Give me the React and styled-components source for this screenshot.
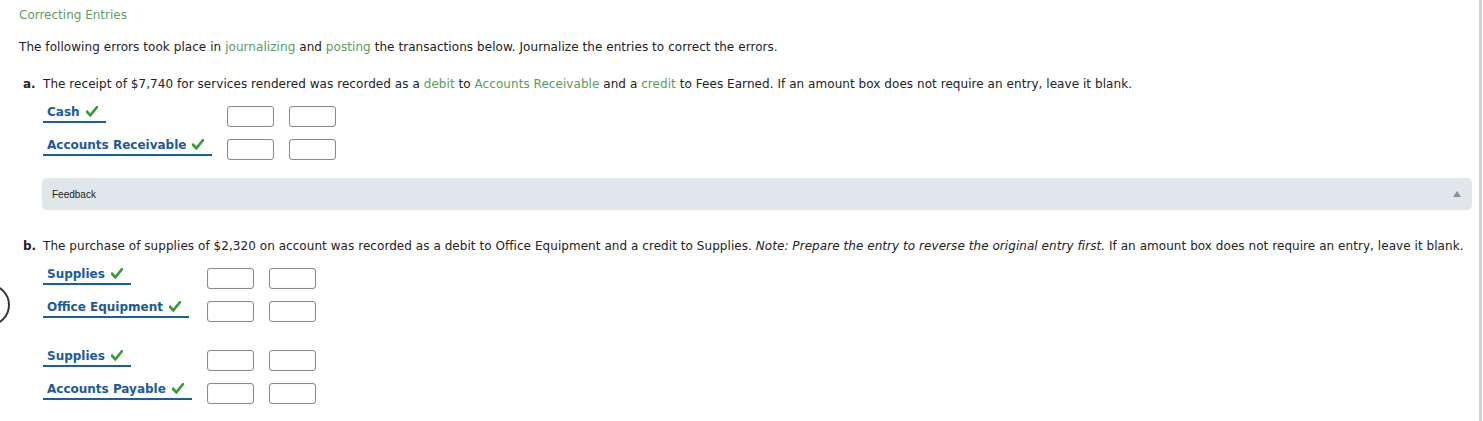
import React from 'react';
import styled, { createGlobalStyle } from 'styled-components';

const GlobalStyle = createGlobalStyle`
  body {
    margin: 0;
    background: #ffffff;
    font-family: "DejaVu Sans", Verdana, sans-serif;
    font-size: 12px;
    color: #222222;
  }
`;

const Page = styled.div`
  position: relative;
  box-sizing: border-box;
  width: 1482px;
  min-height: 421px;
  padding: 7px 7px 0 19px;
  border-right: 3px solid #d0d0d0;
  overflow: hidden;
`;

const Title = styled.div`
  line-height: 16px;
  color: #5e9e62;
`;

const Intro = styled.p`
  margin: 16px 0 0;
  line-height: 16px;
  letter-spacing: 0.06px;
`;

const Green = styled.span`
  color: #5a9a5f;
`;

const Question = styled.div`
  margin-top: ${(p) => p.$top}px;
  padding-left: 4px;
  line-height: 16px;
  letter-spacing: 0.055px;
  white-space: nowrap;
`;

const Letter = styled.b`
  display: inline-block;
  width: 20px;
  letter-spacing: 0;
`;

const Entries = styled.div`
  display: grid;
  grid-template-columns: auto 47px 47px;
  column-gap: 15px;
  margin: 12px 0 0 24px;
  justify-content: start;
`;

const LabelCell = styled.div`
  height: 33px;
`;

const Label = styled.span`
  display: inline-block;
  padding: 0 8px 1px 4px;
  line-height: 16px;
  font-weight: bold;
  font-size: 12px;
  color: #1b5a96;
  border-bottom: 2px solid #1b5e9c;
`;

const Check = styled.svg`
  margin-left: 6px;
  vertical-align: -1px;
`;

const Amount = styled.input`
  box-sizing: border-box;
  width: 47px;
  height: 21px;
  margin-top: 2px;
  border: 1px solid #8a8a8a;
  border-radius: 3px;
  box-shadow: inset 0 0 1px rgba(0, 0, 0, 0.25);
  background: #fff;
  padding: 0;
`;

const Spacer = styled.div`
  grid-column: 1 / -1;
  height: 16px;
`;

const Feedback = styled.div`
  display: flex;
  align-items: center;
  justify-content: space-between;
  height: 32px;
  margin: 8px 0 0 23px;
  padding: 0 11px 0 10px;
  background: #e0e6e9;
  border-radius: 5px;
  font-family: "Liberation Sans", Arial, sans-serif;
  font-size: 10px;
  color: #222;
`;

const Caret = styled.span`
  width: 0;
  height: 0;
  border-left: 4px solid transparent;
  border-right: 4px solid transparent;
  border-bottom: 6px solid #8b9298;
`;

const Ring = styled.div`
  position: absolute;
  left: -32px;
  top: 284px;
  width: 38px;
  height: 38px;
  border: 2.5px solid #333;
  border-radius: 50%;
`;

function CheckMark() {
  return (
    <Check width="12" height="11" viewBox="0 0 12 11">
      <path d="M1 5.8 L4.3 9.3 L11 1.2" fill="none" stroke="#3c9a3c" strokeWidth="2.7" strokeLinecap="square" />
    </Check>
  );
}

function Row({ name }) {
  return (
    <>
      <LabelCell>
        <Label>
          {name}
          <CheckMark />
        </Label>
      </LabelCell>
      <div><Amount type="text" /></div>
      <div><Amount type="text" /></div>
    </>
  );
}

export default function App() {
  return (
    <>
      <GlobalStyle />
      <Page>
        <Ring />
        <Title>Correcting Entries</Title>
        <Intro>
          The following errors took place in <Green>journalizing</Green> and <Green>posting</Green> the transactions below. Journalize the entries to correct the errors.
        </Intro>

        <Question $top={21}>
          <Letter>a.</Letter>The receipt of $7,740 for services rendered was recorded as a <Green>debit</Green> to <Green>Accounts Receivable</Green> and a <Green>credit</Green> to Fees Earned. If an amount box does not require an entry, leave it blank.
        </Question>
        <Entries>
          <Row name="Cash" />
          <Row name="Accounts Receivable" />
        </Entries>

        <Feedback>
          <span>Feedback</span>
          <Caret />
        </Feedback>

        <Question $top={28}>
          <Letter>b.</Letter>The purchase of supplies of $2,320 on account was recorded as a debit to Office Equipment and a credit to Supplies. <i>Note: Prepare the entry to reverse the original entry first.</i> If an amount box does not require an entry, leave it blank.
        </Question>
        <Entries>
          <Row name="Supplies" />
          <Row name="Office Equipment" />
          <Spacer />
          <Row name="Supplies" />
          <Row name="Accounts Payable" />
        </Entries>
      </Page>
    </>
  );
}
